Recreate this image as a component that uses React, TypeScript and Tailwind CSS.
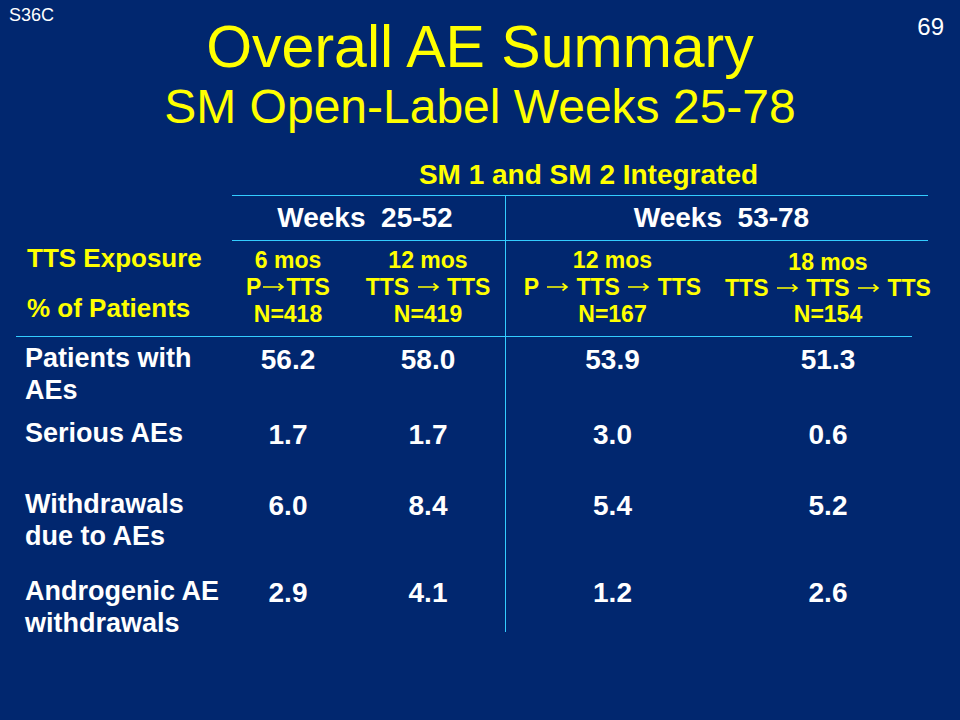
const rows = [
  { label: ['Patients with', 'AEs'], values: ['56.2', '58.0', '53.9', '51.3'], h: 'h-[75px]' },
  { label: ['Serious AEs'], values: ['1.7', '1.7', '3.0', '0.6'], h: 'h-[71px]' },
  { label: ['Withdrawals', 'due to AEs'], values: ['6.0', '8.4', '5.4', '5.2'], h: 'h-[87px]' },
  { label: ['Androgenic AE', 'withdrawals'], values: ['2.9', '4.1', '1.2', '2.6'], h: 'h-[62px]' },
];

const groups = [
  { lines: ['6 mos', 'P>TTS', 'N=418'] },
  { lines: ['12 mos', 'TTS > TTS', 'N=419'] },
  { lines: ['12 mos', 'P > TTS > TTS', 'N=167'] },
  { lines: ['18 mos', 'TTS > TTS > TTS', 'N=154'] },
];

// thin long arrow like the Symbol font one on the slide
function Arrow() {
  return (
    <svg width="23" height="10" viewBox="0 0 23 10" className="mx-px inline-block align-[3px]" aria-label="→">
      <path d="M1 5h20M16.5 1.5L21 5l-4.5 3.5" fill="none" stroke="currentColor" strokeWidth="1.6" />
    </svg>
  );
}

function WithArrows({ text }: { text: string }) {
  const parts = text.split('>');
  return (
    <span>
      {parts.map((p, i) => (
        <span key={i}>
          {p}
          {i < parts.length - 1 && <Arrow />}
        </span>
      ))}
    </span>
  );
}

export default function App() {
  return (
    <div className="w-[960px] h-[720px] overflow-hidden bg-[#01276f] font-['Liberation_Sans',Arial,sans-serif]">
      {/* slide header */}
      <div className="grid grid-cols-[100px_1fr_100px]">
        <div className="pl-[9px] pt-[6px] text-[18px] leading-none text-white">S36C</div>
        <div className="flex flex-col items-center pt-[18px] text-[#ffff00]">
          <h1 className="text-[59px] leading-none whitespace-nowrap">Overall AE Summary</h1>
          <h2 className="mt-[6px] text-[48px] leading-none whitespace-nowrap">SM Open-Label Weeks 25-78</h2>
        </div>
        <div className="pr-[16px] pt-[15px] text-right text-[24px] leading-none text-white">69</div>
      </div>

      {/* table */}
      <div className="ml-[16px] mt-[30px] grid grid-cols-[209px_126px_154px_214px_218px] font-bold">
        <div className="col-start-2 col-span-4 h-[34px] pl-[15px] text-center text-[28px] leading-none text-[#ffff00] whitespace-nowrap">
          SM 1 and SM 2 Integrated
        </div>
        <div className="col-start-2 col-span-4 ml-[7px] mr-[9px] h-px bg-[#33ccff]" />

        <div />
        <div className="col-span-2 h-[44px] pt-[8px] text-center text-[28px] leading-none text-white whitespace-pre">
          Weeks{'\u00a0 '}25-52
        </div>
        <div className="col-span-2 h-[44px] border-l border-[#33ccff] pt-[8px] text-center text-[28px] leading-none text-white whitespace-pre">
          Weeks{'\u00a0 '}53-78
        </div>
        <div className="col-start-2 col-span-4 ml-[7px] mr-[9px] h-px bg-[#33ccff]" />

        <div className="flex h-[95px] flex-col pl-[11px] pt-[4px] text-[26px] leading-none text-[#ffff00] whitespace-nowrap">
          <span>TTS Exposure</span>
          <span className="mt-[24px]">% of Patients</span>
        </div>
        {groups.map((g, i) => (
          <div
            key={i}
            className={
              i === 3
                ? 'flex h-[95px] flex-col items-center pt-[8px] text-[23px] leading-[26px] text-[#ffff00] whitespace-nowrap'
                : i === 2
                ? 'flex h-[95px] flex-col items-center border-l border-[#33ccff] pt-[6px] text-[23px] leading-[27px] text-[#ffff00] whitespace-nowrap'
                : 'flex h-[95px] flex-col items-center pt-[6px] text-[23px] leading-[27px] text-[#ffff00] whitespace-nowrap'
            }
          >
            {g.lines.map((l) => (
              <WithArrows key={l} text={l} />
            ))}
          </div>
        ))}
        <div className="col-span-5 mr-[25px] h-px bg-[#33ccff]" />

        {rows.map((r) => (
          <div key={r.label[0]} className="contents">
            <div className={`${r.h} flex flex-col pl-[9px] pt-[5px] text-[27px] leading-[32px] text-white whitespace-nowrap`}>
              {r.label.map((l) => (
                <span key={l}>{l}</span>
              ))}
            </div>
            {r.values.map((v, i) => (
              <div
                key={i}
                className={
                  i === 2
                    ? `${r.h} border-l border-[#33ccff] pt-[7px] text-center text-[28px] leading-[32px] text-white`
                    : `${r.h} pt-[7px] text-center text-[28px] leading-[32px] text-white`
                }
              >
                {v}
              </div>
            ))}
          </div>
        ))}
      </div>
    </div>
  );
}
